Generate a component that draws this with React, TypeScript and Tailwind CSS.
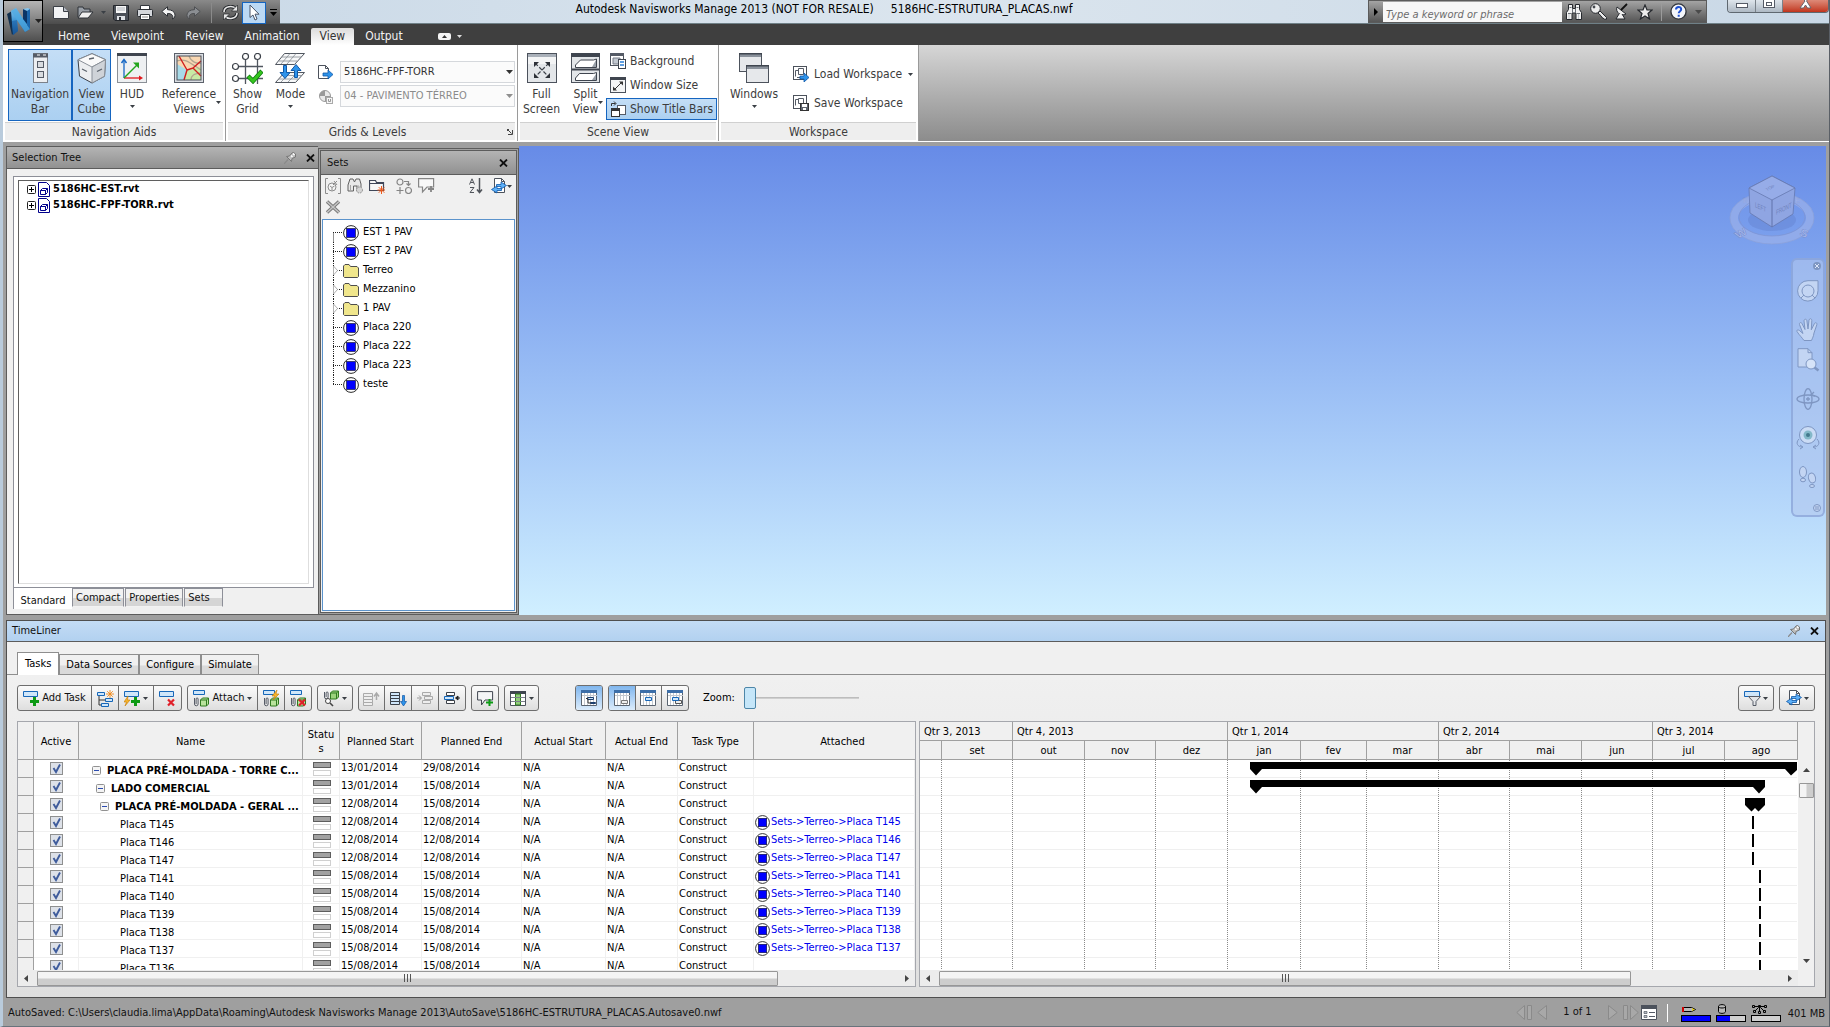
import type { ReactNode } from "react";

/* ---------- small helpers ---------- */

function Caret({ className = "text-[#3a3f45]" }: { className?: string }) {
  return (
    <svg width="7" height="4" viewBox="0 0 7 4" className={"shrink-0 " + className} aria-hidden="true">
      <path d="M0 0h7L3.500 4z" fill="currentColor" />
    </svg>
  );
}

function SmallCaret() {
  return (
    <svg width="5" height="3" viewBox="0 0 5 3" className="shrink-0" aria-hidden="true">
      <path d="M0 0h5L2.500 3z" fill="#3a3f45" />
    </svg>
  );
}

function CloseGlyph() {
  return (
    <svg width="9" height="8" viewBox="0 0 9 8" aria-hidden="true">
      <path d="M1 .5l7 7M8 .5l-7 7" stroke="#111" strokeWidth="1.800" />
    </svg>
  );
}

function PinGlyph() {
  return (
    <svg width="12" height="12" viewBox="0 0 12 12" aria-hidden="true">
      <path d="M0 12l4-4.500" stroke="#8a8a8a" strokeWidth="1.200" />
      <path d="M2.500 4.500l5 5 .5-3 3.500-1.500V2L9.500.5 8 1 5.500 4z" fill="#bdbdbd" stroke="#767676" />
      <path d="M7 3.500l1.500 1.500M9 1.500l1.500 1.500" stroke="#fff" strokeWidth="1.400" />
    </svg>
  );
}

function SetBall({ size }: { size: number }) {
  return (
    <svg width={size} height={size} viewBox="0 0 16 16" className="shrink-0" aria-hidden="true">
      <circle cx="8" cy="8" r="7.400" fill="#fff" stroke="#2a2a2a" />
      <rect x="3.500" y="3.500" width="9" height="9" fill="#0000ff" stroke="#112" strokeWidth=".6" />
    </svg>
  );
}

function FolderGlyph() {
  return (
    <svg width="16" height="16" viewBox="0 0 16 16" className="shrink-0" aria-hidden="true">
      <path d="M.5 13.500V3L2 1.500h4L7.500 3.500H14L15.500 5v8.500l-1 1h-13z" fill="#f0e68c" stroke="#4d4d4d" />
    </svg>
  );
}

/* ---------- application header ---------- */

function AppLogo() {
  return (
    <svg width="24" height="27" viewBox="0 0 24 27" aria-hidden="true">
      <defs>
        <linearGradient id="lg" x1="0" y1="0" x2="0" y2="1">
          <stop offset="0" stopColor="#8ccaf0" />
          <stop offset=".5" stopColor="#3a92d2" />
          <stop offset="1" stopColor="#0d4484" />
        </linearGradient>
      </defs>
      <path d="M0 6l5-3 5 4-1 15-4 5z" fill="#12304f" />
      <path d="M4 3l5-3 7 11V1l5-1 2 1v20l-5 3-8-12 1 11-5 4z" fill="url(#lg)" />
      <path d="M9 0l14 21-5 3L4 3z" fill="#4da8e0" opacity=".75" />
      <path d="M16 1l4 2v13l-4-5z" fill="#0b3566" />
      <path d="M20 3l3-2v20l-3-4z" fill="#1b65ab" />
      <path d="M10 12l1 11-5 4-1-14z" fill="#1c5fa3" opacity=".6" />
    </svg>
  );
}

function QuickButton({ label, children, w = "w-6" }: { label: string; children: ReactNode; w?: string }) {
  return (
    <button aria-label={label} className={"flex h-[22px] items-center justify-center " + w}>
      {children}
    </button>
  );
}

function QuickAccess() {
  return (
    <div className="flex h-6 w-[237px] shrink-0 items-center bg-gradient-to-b from-[#8a8a8a] to-[#4c4c4c] pt-px pl-1.5">
      <QuickButton label="New">
        <svg width="16" height="13" viewBox="0 0 16 13"><path d="M.5.500h10l5 5v7H.5z" fill="#f2f3f5" stroke="#3b3f46" /><path d="M10.500.500v5h5" fill="#b9bec6" stroke="#3b3f46" /></svg>
      </QuickButton>
      <QuickButton label="Open">
        <svg width="17" height="13" viewBox="0 0 17 13"><path d="M1 11V1h5l1 2h6v3" fill="#9aa0a8" stroke="#2f3338" /><path d="M1 12l4-6h11l-5 6z" fill="#f0f0f0" stroke="#2f3338" /></svg>
      </QuickButton>
      <QuickButton label="Open options" w="w-3"><SmallCaret /></QuickButton>
      <QuickButton label="Save">
        <svg width="16" height="16" viewBox="0 0 16 16"><path d="M.5.500h15v15H2l-1.500-1.500z" fill="#4b5058" stroke="#24272c" /><path d="M3 1h10v7H3z" fill="#f7f7f7" /><path d="M4 11h8v4H4z" fill="#dfe2e6" /><path d="M6 12h2v3H6z" fill="#30343a" /><path d="M4 3h8M4 5h8" stroke="#aeb3ba" /></svg>
      </QuickButton>
      <QuickButton label="Print">
        <svg width="16" height="15" viewBox="0 0 16 15"><path d="M3.500 5V.5h9V5" fill="#fff" stroke="#33373d" /><rect x=".5" y="4.500" width="15" height="7" rx="1" fill="#d4d7dc" stroke="#2b2e33" /><path d="M3.500 9.500h9v5h-9z" fill="#fff" stroke="#33373d" /><path d="M5 12h6" stroke="#888" /></svg>
      </QuickButton>
      <QuickButton label="Undo">
        <svg width="16" height="14" viewBox="0 0 16 14"><path d="M6.500.8L.8 5.500l5.700 4.700V7.500c4 0 6 1.500 5 5.500C15 12 16 4 6.500 3.600z" fill="#f4f4f4" stroke="#2b2e33" /></svg>
      </QuickButton>
      <QuickButton label="Redo">
        <svg width="16" height="14" viewBox="0 0 16 14"><path d="M9.500.8l5.700 4.700-5.700 4.700V7.500c-4 0-6 1.500-5 5.500C1 12 0 4 9.500 3.600z" fill="#8b8e92" stroke="#4d4f52" /></svg>
      </QuickButton>
      <span className="mx-1.5 h-5 w-px bg-[#8a8a8a]" />
      <QuickButton label="Refresh">
        <svg width="17" height="15" viewBox="0 0 17 15" fill="none"><path d="M2 7c0-6 9-7 12-3M15 8c0 6-9 7-12 3" stroke="#26292d" strokeWidth="3.500" /><path d="M2 7c0-6 9-7 12-3M15 8c0 6-9 7-12 3" stroke="#e8e8e8" strokeWidth="1.600" /><path d="M15.500 0v6h-6zM1.500 15V9h6z" fill="#e8e8e8" stroke="#26292d" strokeWidth=".7" /></svg>
      </QuickButton>
      <button aria-label="Select" className="flex h-[22px] w-6 items-center justify-center border border-[#1565c0] bg-[#bcd9f4]">
        <svg width="11" height="17" viewBox="0 0 11 17"><path d="M1 1v12.500l3-2.500 2 5 2-1-2-4.800h4z" fill="#fff" stroke="#4a5568" /></svg>
      </button>
      <button aria-label="Customize quick access" className="flex h-[22px] flex-1 flex-col items-center justify-center gap-0.5">
        <span className="h-px w-[7px] bg-black" />
        <Caret className="text-black" />
      </button>
    </div>
  );
}

function SearchBox() {
  return (
    <div className="flex h-[23px] w-[339px] shrink-0 items-center border border-[#5b5b5b] bg-gradient-to-b from-[#a4a4a4] to-[#565656]">
      <button aria-label="Collapse search" className="flex w-3.5 justify-center">
        <svg width="4" height="8" viewBox="0 0 4 8"><path d="M0 0l4 4-4 4z" /></svg>
      </button>
      <input
        aria-label="Search"
        placeholder="Type a keyword or phrase"
        className="h-5 w-[179px] bg-[#f7f7f7] px-[3px] pt-1.5 text-[11px] italic placeholder:text-[#6b6b6b]"
      />
      <div className="flex flex-1 items-center justify-between pr-1 pl-1">
        <button aria-label="Find">
          <svg width="16" height="16" viewBox="0 0 16 16"><path d="M2.500.500h4v4h3v-4h4v5l2 3v7h-5.500V9h-4v6.500H.5v-7l2-3z" fill="#f2f2f2" stroke="#25282d" /><path d="M6.500 5v4M9.500 5v4M2 9.500h3M11 9.500h3M3.500 3.500h2M10.500 3.500h2" stroke="#6c7178" /><path d="M3 10v5M12.500 10v5" stroke="#c2c6cb" /></svg>
        </button>
        <button aria-label="Subscription">
          <svg width="17" height="17" viewBox="0 0 17 17"><circle cx="5.500" cy="5.500" r="4.800" fill="#ececec" stroke="#25282d" /><path d="M8 10l2-2 6.500 6.500v1.700h-2.300l-1-1.200-1.500-.5-.5-1.500z" fill="#ececec" stroke="#25282d" /><circle cx="4" cy="4" r="1.400" fill="#44484e" /></svg>
        </button>
        <button aria-label="Communication Center">
          <svg width="14" height="17" viewBox="0 0 14 17"><path d="M2 4c-2 5 4 10 9 7z" fill="#eee" stroke="#25282d" /><path d="M6 7l6-6" stroke="#111" strokeWidth="1.800" /><path d="M4 11l-3 5h9l-3-5" fill="#f2f2f2" stroke="#25282d" /></svg>
        </button>
        <button aria-label="Favorites">
          <svg width="16" height="16" viewBox="0 0 16 16"><path d="M8 1l2 5h5l-4 3.500 1.600 5.500L8 12l-4.600 3L5 9.500 1 6h5z" fill="#ededed" stroke="#25282d" strokeWidth="1.200" /></svg>
        </button>
        <span className="h-[18px] w-px bg-[#9b9b9b]" />
        <button aria-label="Help">
          <svg width="17" height="17" viewBox="0 0 17 17"><circle cx="8.500" cy="8.500" r="7.600" fill="#f4f6fb" stroke="#33363c" strokeWidth="1.400" /><path d="M6 6.500C6 3 11.300 3.200 11.200 6.300c0 1.900-2.500 2-2.500 4M8.700 11.700v2" stroke="#1d4fd0" strokeWidth="2" fill="none" /></svg>
        </button>
        <Caret className="text-[#4a4a4a]" />
      </div>
    </div>
  );
}

function WindowButtons() {
  return (
    <div className="ml-5 flex h-[13px] w-[102px] shrink-0 overflow-hidden rounded-b-[4px] border border-t-0 border-[#5f6870]">
      <button aria-label="Minimize" className="flex w-[28px] items-center justify-center border-r border-[#7a828a] bg-gradient-to-b from-[#dfe6ec] to-[#aeb9c4]">
        <span className="-mt-0.5 h-[5px] w-3 border border-[#555b66] bg-white" />
      </button>
      <button aria-label="Restore" className="flex w-[27px] justify-center border-r border-[#7a828a] bg-gradient-to-b from-[#dfe6ec] to-[#aeb9c4]">
        <span className="flex h-2 w-3 items-center justify-center border border-t-0 border-[#555b66] bg-white">
          <span className="h-1 w-1.5 border border-[#555b66]" />
        </span>
      </button>
      <button aria-label="Close" className="flex flex-1 justify-center bg-gradient-to-b from-[#dd8a78] to-[#c0331c]">
        <svg width="13" height="9" viewBox="0 0 13 9"><path d="M1 -4l5 5-5 7h3.500l2-3 2 3H12L7.500 1l4-5" fill="#fff" stroke="#5a5f6a" strokeWidth=".9" /></svg>
      </button>
    </div>
  );
}

const menuTabs = ["Home", "Viewpoint", "Review", "Animation", "View", "Output"];

function Header() {
  return (
    <header className="flex bg-[#3f3f3f]">
      <button aria-label="Application menu" className="flex h-[42px] w-10 shrink-0 items-center gap-1 border border-black bg-gradient-to-b from-[#b5b5b5] to-[#505050] pl-[3px]">
        <AppLogo />
        <Caret className="text-[#222]" />
      </button>
      <div className="flex min-w-0 flex-1 flex-col">
        <div className="flex h-6 border-b border-[#6f8087] bg-gradient-to-r from-[#c7d7e6] via-[#dbe5ee] to-[#c9d8e6]">
          <QuickAccess />
          <h1 className="min-w-0 flex-1 truncate text-center text-xs leading-[18px] whitespace-pre text-black">
            {"Autodesk Navisworks Manage 2013 (NOT FOR RESALE)     5186HC-ESTRUTURA_PLACAS.nwf"}
          </h1>
          <SearchBox />
          <WindowButtons />
        </div>
        <nav className="flex h-[21px] items-end gap-px pl-[5px] text-xs text-[#f2f2f2]">
          {menuTabs.map((t) => (
            <button
              key={t}
              className={
                t === "View"
                  ? "h-[17px] rounded-t-[2px] bg-gradient-to-b from-[#dcdcdc] to-white px-[9px] pb-0.5 leading-[14px] text-[#333]"
                  : "h-[17px] px-2.5 pb-0.5 leading-[14px]"
              }
            >
              {t}
            </button>
          ))}
          <button aria-label="Minimize ribbon" className="ml-6 flex h-[17px] items-center gap-1.5 pb-px">
            <svg width="13" height="7" viewBox="0 0 13 7"><rect width="13" height="7" rx="2" fill="#f4f4f4" /><path d="M4 5l2.500-3L9 5z" fill="#333" /></svg>
            <svg width="5" height="3" viewBox="0 0 5 3"><path d="M0 0h5L2.500 3z" fill="#ddd" /></svg>
          </button>
        </nav>
      </div>
    </header>
  );
}

/* ---------- ribbon ---------- */

function RibbonPanel({ title, children, w, launcher }: { title: string; children: ReactNode; w: string; launcher?: boolean }) {
  return (
    <section className={"flex shrink-0 flex-col border-r border-[#9a9a9a] bg-white " + w}>
      <div className="flex h-[77px] items-start pt-1">{children}</div>
      <div className="mx-0.5 flex h-[18px] items-center border-t border-[#d0d0d0] bg-[#eeeeee]">
        <h2 className="flex-1 text-center text-xs leading-4 text-[#3c3c3c]">{title}</h2>
        {launcher && (
          <button aria-label={title + " options"} className="mr-0.5">
            <svg width="6" height="6" viewBox="0 0 6 6"><path d="M0 .5h2M.5 0v2M1 1l3.500 3.500M5.500 1v4.500H1" stroke="#444" fill="none" /></svg>
          </button>
        )}
      </div>
      <div className="h-px" />
    </section>
  );
}

function BigButton({ icon, lines, caret, sideCaret, active, w }: { icon: ReactNode; lines: string[]; caret?: boolean; sideCaret?: boolean; active?: boolean; w: string }) {
  return (
    <button
      className={
        "flex h-[72px] shrink-0 flex-col items-center border pt-[3px] text-xs leading-[15px] text-[#3c3c3c] " +
        (active ? "border-[#1565c0] bg-gradient-to-b from-[#c4def6] to-[#abd0f1] " : "border-transparent ") +
        w
      }
    >
      {icon}
      <span className="mt-[3px] flex items-center">
        {sideCaret && <span className="w-[5px]" />}
        <span className="flex flex-col items-center">
          {lines.map((l) => (
            <span key={l}>{l}</span>
          ))}
        </span>
        {sideCaret && <SmallCaret />}
      </span>
      {caret && <span className="mt-[3px]"><SmallCaret /></span>}
    </button>
  );
}

const navBarIcon = (
  <svg width="30" height="31" viewBox="0 0 30 31"><rect x="8.500" y=".5" width="14" height="29" fill="#eceef1" stroke="#7b818a" /><path d="M8 .5h15v4H8z" fill="#555b66" /><path d="M18 2h3M12 2h3" stroke="#fff" /><rect x="12.500" y="8.500" width="6" height="6" fill="#d9dce0" stroke="#555b66" /><rect x="12.500" y="18.500" width="6" height="6" fill="#d9dce0" stroke="#555b66" /></svg>
);
const cubeIcon = (
  <svg width="30" height="31" viewBox="0 0 30 31"><path d="M15 .7l13.500 6-1 16.500L15 30 2.500 23.200 1 6.700z" fill="#eceef0" stroke="#3b4048" /><path d="M1 6.700L15 14l13.500-7.300L15 .7z" fill="#fafafa" stroke="#8a9098" /><path d="M15 14v16l12.500-6.800 1-16.500z" fill="#cfd3d8" stroke="#8a9098" /><path d="M5 16l5 2.500M20 18.500l5-2.500M12 6l5-1" stroke="#5c636c" strokeWidth="1.300" /></svg>
);
const hudIcon = (
  <svg width="30" height="31" viewBox="0 0 30 31"><rect x=".5" y=".5" width="29" height="29" fill="#eef0f2" stroke="#8b9097" /><path d="M0 0h30v3H0z" fill="#3f454f" /><path d="M7 25V8" stroke="#1767c4" strokeWidth="1.300" /><path d="M4.500 10L7 6.500 9.500 10" fill="none" stroke="#1767c4" strokeWidth="1.500" /><path d="M7 25h17" stroke="#e0171c" strokeWidth="1.300" /><path d="M22 22.500l4 2.500-4 2.500z" fill="#e0171c" /><path d="M7 25L20 12" stroke="#22a51c" strokeWidth="1.500" /><path d="M22 9.500v6l-6-6z" fill="#22a51c" /></svg>
);
const mapIcon = (
  <svg width="30" height="31" viewBox="0 0 30 31"><rect x=".5" y=".5" width="29" height="29" fill="#dcdfe3" stroke="#5b616b" /><rect x="3" y="3" width="24" height="24" fill="#f9d7b2" /><path d="M3 11l10 6-3 10H3z" fill="#a8dbe8" /><path d="M13 17l14-3v13H10z" fill="#c8eaa4" /><path d="M3 8c8-3 12 1 24 9M15 3c2 6 8 8 12 7M17 27c0-5 5-7 10-7" stroke="#b3a68f" strokeWidth="1.300" fill="none" /><path d="M5 3l8 14-3 10M13 17l6-2 8 8M19 15l8-7" stroke="#d01e1e" strokeWidth="1.400" fill="none" /><rect x="3" y="3" width="24" height="24" fill="none" stroke="#4b515b" /></svg>
);
const gridIcon = (
  <svg width="31" height="31" viewBox="0 0 31 31" fill="none"><path d="M13.500 7v24M25.500 7v24M6 13.500h25M6 25.500h25" stroke="#50565f" strokeWidth="1.300" /><circle cx="13.500" cy="3.500" r="3" stroke="#3b4048" fill="#fff" strokeWidth="1.200" /><circle cx="25.500" cy="3.500" r="3" stroke="#3b4048" fill="#fff" strokeWidth="1.200" /><circle cx="3.500" cy="13.500" r="3" stroke="#3b4048" fill="#fff" strokeWidth="1.200" /><circle cx="3.500" cy="25.500" r="3" stroke="#3b4048" fill="#fff" strokeWidth="1.200" /><path d="M16 23l5 5 9-10" stroke="#0d7a10" strokeWidth="4.500" /><path d="M16.500 23.500l4.500 4.500 8.500-9.500" stroke="#35c41e" strokeWidth="3" /></svg>
);
const modeIcon = (
  <svg width="31" height="31" viewBox="0 0 31 31"><path d="M9.500.5h20l-10 11H.5zM9.500 19.500h20l-9 10H.5z" fill="#f7f8f9" stroke="#50565f" /><path d="M7 4h19M4 8h18M15 .5L6 11M21 .5L12 11M7 22.500h19M4 26h19M15 20l-9 9M22 20l-9 9" stroke="#858b93" strokeWidth=".8" /><path d="M8.500 12.500h3v7h3.500l-5 6-5-6h3.500z" fill="#2e93ea" stroke="#0f58a8" /><path d="M19.500 24.500h3v-7h3.500l-5-6-5 6h3.500z" fill="#2e93ea" stroke="#0f58a8" /></svg>
);
const fullIcon = (
  <svg width="30" height="31" viewBox="0 0 30 31"><rect x=".5" y=".5" width="29" height="29" fill="#e3e6e9" stroke="#4c525c" /><path d="M1 1h28v3H1z" fill="#a9b0b9" /><path d="M1 4h28v7H1z" fill="#f3f4f5" /><path d="M8 10l14 14M22 10L8 24" stroke="#3b4048" strokeWidth="1.200" strokeDasharray="4 2" /><path d="M7 9h5l-5 5zM23 9h-5l5 5zM7 25h5l-5-5zM23 25h-5l5-5z" fill="#2d3138" /></svg>
);
const splitIcon = (
  <svg width="30" height="31" viewBox="0 0 30 31"><rect x=".5" y=".5" width="28" height="29" fill="#e3e6e9" stroke="#4c525c" /><path d="M0 0h29v4H0z" fill="#3f454f" /><path d="M1 16.500h27" stroke="#3f454f" strokeWidth="2" /><path d="M4.500 14.500V12l5-5h13l3-1v8.500zM4.500 27.500V25l4-4.500h14l3-1v8z" fill="#fff" stroke="#3f454f" /><path d="M21 14l4-7v7zM21 27l4-6v6z" fill="#9aa1aa" /></svg>
);
const windowsIcon = (
  <svg width="30" height="31" viewBox="0 0 30 31"><rect x=".5" y=".5" width="22" height="18" fill="#e6e8eb" stroke="#4c525c" /><path d="M1 1h21v3H1z" fill="#8a919b" /><path d="M0 0h23v1.500H0z" fill="#3f454f" /><rect x="7.500" y="12.500" width="22" height="17" fill="#e6e8eb" stroke="#4c525c" /><path d="M8 13h21v3H8z" fill="#8a919b" /><path d="M7 12h23v1.500H7z" fill="#3f454f" /></svg>
);

function RibbonSelect({ label, value, disabled }: { label: string; value: string; disabled?: boolean }) {
  return (
    <div className="relative">
      <select
        aria-label={label}
        disabled={disabled}
        className={"block h-[22px] w-[175px] appearance-none border border-[#d5d8dc] bg-[#fbfbfb] pr-4 pl-[3px] text-[11px] " + (disabled ? "text-[#8b8b8b]" : "text-[#333]")}
      >
        <option>{value}</option>
      </select>
      <span className="pointer-events-none absolute top-[9px] right-0.5">
        <Caret className={disabled ? "text-[#8f8f8f]" : "text-[#333]"} />
      </span>
    </div>
  );
}

function SmallButton({ icon, label, active, caret }: { icon: ReactNode; label: string; active?: boolean; caret?: boolean }) {
  return (
    <button
      className={
        "flex h-[22px] items-center border pr-[3px] pl-[3px] text-xs whitespace-nowrap text-[#3c3c3c] " +
        (active ? "border-[#1565c0] bg-gradient-to-b from-[#c4def6] to-[#abd0f1]" : "border-transparent")
      }
    >
      {icon}
      <span className="ml-1">{label}</span>
      {caret && <span className="ml-1.5"><SmallCaret /></span>}
    </button>
  );
}

const bgIcon = (
  <svg width="16" height="16" viewBox="0 0 16 16"><rect x=".5" y=".5" width="13" height="12" fill="#fff" stroke="#4c525c" /><path d="M0 0h14v3H0z" fill="#555b66" /><path d="M3 5h7v6H3z" fill="#c2c8d0" stroke="#767d88" /><rect x="8.500" y="6.500" width="7" height="9" fill="#fff" stroke="#3f454f" /><path d="M10 9h4M10 12h4" stroke="#2b7fd6" strokeWidth="1.500" /></svg>
);
const sizeIcon = (
  <svg width="16" height="16" viewBox="0 0 16 16"><rect x=".5" y=".5" width="15" height="15" fill="#f4f5f6" stroke="#4c525c" /><path d="M0 0h16v3H0z" fill="#3f454f" /><path d="M4 13l8-8" stroke="#333" /><path d="M9 4.500h4v4zM3 9.500v4h4z" fill="#333" /></svg>
);
const titleBarsIcon = (
  <svg width="16" height="16" viewBox="0 0 16 16"><path d="M1.500 5V2.500h4M4 .5l2 2-2 2" stroke="#333" fill="none" /><rect x="7.500" y="4.500" width="8" height="9" fill="#fff" stroke="#555b66" /><rect x="1.500" y="7.500" width="8" height="8" fill="#fff" stroke="#333" /><path d="M1 7h9v3H1z" fill="#333" /></svg>
);
const loadIcon = (
  <svg width="17" height="16" viewBox="0 0 17 16"><rect x=".5" y=".5" width="13" height="13" fill="#fff" stroke="#4c525c" /><path d="M2.500 10.500v-6h3M5.500 2.500h5v6h-5z" stroke="#555b66" fill="none" /><path d="M4 11.500h5" stroke="#555b66" /><path d="M7 10h4V7l5 4.500-5 4.500v-3H7z" fill="#2e93ea" stroke="#0f58a8" strokeWidth=".8" /></svg>
);
const saveWsIcon = (
  <svg width="17" height="16" viewBox="0 0 17 16"><rect x=".5" y=".5" width="13" height="13" fill="#fff" stroke="#4c525c" /><path d="M2.500 10.500v-6h3M5.500 3.500h5v5h-5z" stroke="#555b66" fill="none" /><rect x="7.500" y="8.500" width="8" height="7" fill="#5d636d" stroke="#333" /><path d="M9 9h5v3H9zM10 13h3v2h-3z" fill="#fff" /></svg>
);

function Ribbon() {
  return (
    <div className="flex border-b border-white bg-gradient-to-b from-[#d6d6d6] to-[#8c8c8c]">
      <RibbonPanel title="Navigation Aids" w="w-[223px]">
        <span className="w-[5px]" />
        <BigButton icon={navBarIcon} lines={["Navigation", "Bar"]} active w="w-[64px]" />
        <BigButton icon={cubeIcon} lines={["View", "Cube"]} active w="w-[39px]" />
        <BigButton icon={hudIcon} lines={["HUD"]} caret w="w-[42px]" />
        <BigButton icon={mapIcon} lines={["Reference", "Views"]} sideCaret w="w-[72px]" />
      </RibbonPanel>
      <RibbonPanel title="Grids & Levels" launcher w="w-[292px]">
        <BigButton icon={gridIcon} lines={["Show", "Grid"]} w="w-[43px]" />
        <BigButton icon={modeIcon} lines={["Mode"]} caret w="w-[43px]" />
        <div className="flex flex-col gap-0.5 pt-3">
          <div className="flex items-center gap-[7px] pl-1.5">
            <svg width="15" height="15" viewBox="0 0 15 15"><path d="M.5.500h7l3 3v10H.5z" fill="#fff" stroke="#4c525c" /><path d="M7.500.500v3h3" fill="none" stroke="#4c525c" /><path d="M5 8h5V5l5 4.500L10 14v-3H5z" fill="#2e93ea" stroke="#0f58a8" strokeWidth=".8" /></svg>
            <RibbonSelect label="Active grid" value="5186HC-FPF-TORR" />
          </div>
          <div className="flex items-center gap-[7px] pl-1.5">
            <svg width="15" height="15" viewBox="0 0 15 15"><circle cx="7" cy="7" r="5.500" fill="#e9e9e9" stroke="#999" /><path d="M7 1.500V7H1.500A5.500 5.500 0 017 1.500zM7 7h5.500v5H7z" fill="#999" /><rect x="8.500" y="8.500" width="6" height="6" fill="#f5f5f5" stroke="#aaa" /><path d="M10.500 10v2.500h2V10" stroke="#999" fill="none" /></svg>
            <RibbonSelect label="Active level" value="04 - PAVIMENTO TÉRREO" disabled />
          </div>
        </div>
      </RibbonPanel>
      <RibbonPanel title="Scene View" w="w-[201px]">
        <BigButton icon={fullIcon} lines={["Full", "Screen"]} w="w-[47px]" />
        <BigButton icon={splitIcon} lines={["Split", "View"]} sideCaret w="w-[41px]" />
        <div className="flex flex-col gap-0.5 pt-px">
          <SmallButton icon={bgIcon} label="Background" />
          <SmallButton icon={sizeIcon} label="Window Size" />
          <SmallButton icon={titleBarsIcon} label="Show Title Bars" active />
        </div>
      </RibbonPanel>
      <RibbonPanel title="Workspace" w="w-[200px]">
        <BigButton icon={windowsIcon} lines={["Windows"]} caret w="w-[70px]" />
        <div className="flex flex-col gap-[7px] pt-3.5">
          <SmallButton icon={loadIcon} label="Load Workspace" caret />
          <SmallButton icon={saveWsIcon} label="Save Workspace" />
        </div>
      </RibbonPanel>
    </div>
  );
}

/* ---------- docked panels ---------- */

const treeFiles = ["5186HC-EST.rvt", "5186HC-FPF-TORR.rvt"];

function SelectionTree() {
  return (
    <section className="flex w-[312px] shrink-0 flex-col border border-r-0 border-[#5c5c5c] bg-[#f0f0f0]">
      <div className="flex h-[22px] shrink-0 items-center border-b border-[#5c5c5c] bg-gradient-to-b from-[#b4b4b4] to-[#919191] pr-[3px] pl-[5px]">
        <h2 className="flex-1 text-[11px] leading-4 text-[#111]">Selection Tree</h2>
        <button aria-label="Pin" className="mr-2.5"><PinGlyph /></button>
        <button aria-label="Close Selection Tree"><CloseGlyph /></button>
      </div>
      <div className="mt-[7px] mr-1 ml-1.5 flex flex-1 border border-[#8d8f98] bg-white px-1 py-[3px]">
        <ul className="flex-1 border border-t-[#5f5f5f] border-r-[#dedede] border-b-[#dedede] border-l-[#5f5f5f] pl-2 text-[11px] font-bold">
          {treeFiles.map((f) => (
            <li key={f} className="flex h-4 items-center">
              <button aria-label={"Expand " + f} className="mr-0.5">
                <svg width="9" height="9" viewBox="0 0 9 9"><rect x=".5" y=".5" width="8" height="8" rx="1" fill="#fff" stroke="#222" /><path d="M2 4.500h5M4.500 2v5" stroke="#000" /></svg>
              </button>
              <svg width="12" height="15" viewBox="0 0 12 15" className="mr-[3px]"><path d="M.5.500h8l3 3v11H.5z" fill="#fff" stroke="#00008b" /><path d="M2.500 8.500l2-2h5l-2 2zM2.500 8.500h5v4h-5zM7.500 12.500l2-2v-4" fill="#fff" stroke="#00008b" /></svg>
              {f}
            </li>
          ))}
        </ul>
      </div>
      <div className="mr-1 ml-1.5 flex items-start text-[11px] leading-4 text-[#111]">
        <button className="h-[21px] w-[59px] border-l border-[#8d8f98] bg-white pt-1 leading-4">Standard</button>
        {["Compact", "Properties", "Sets"].map((t) => (
          <button key={t} className="mr-px h-[19px] border border-t border-[#8d8f98] border-b-transparent bg-gradient-to-b from-[#f2f2f2] from-50% to-[#d5d5d5] to-55% px-[3px] leading-4 last:pr-3">
            {t}
          </button>
        ))}
      </div>
      <div className="h-[5px]" />
    </section>
  );
}

const setItems: { name: string; folder?: boolean }[] = [
  { name: "EST 1 PAV" },
  { name: "EST 2 PAV" },
  { name: "Terreo", folder: true },
  { name: "Mezzanino", folder: true },
  { name: "1 PAV", folder: true },
  { name: "Placa 220" },
  { name: "Placa 222" },
  { name: "Placa 223" },
  { name: "teste" },
];

function ImportGlyph() {
  return (
    <svg width="16" height="16" viewBox="0 0 16 16" className="shrink-0" aria-hidden="true">
      <path d="M3.500.500h7l3 3v11h-10z" fill="#fff" stroke="#4c525c" />
      <path d="M10.500.500v3h3" fill="none" stroke="#4c525c" />
      <path d="M5.500 6.500h4.500V4L15.500 7.500 10 11V8.500H5.500z" fill="#5db0f8" stroke="#0f58a8" strokeWidth=".8" />
      <path d="M10.500 10.500H6V8L.5 11.500 6 15v-2.500h4.500z" fill="#5db0f8" stroke="#0f58a8" strokeWidth=".8" />
    </svg>
  );
}

function SetsWindow() {
  return (
    <section className="mt-0.5 flex w-[201px] shrink-0 flex-col border-3 border-[#5c5c5c] bg-[#f0f0f0] outline-1 -outline-offset-2 outline-[#a0a0a0]">
      <div className="flex h-6 shrink-0 items-center border-b border-[#5c5c5c] bg-gradient-to-b from-[#b4b4b4] to-[#919191] pr-2 pl-1.5">
        <h2 className="flex-1 pt-px text-[11px] text-[#111]">Sets</h2>
        <button aria-label="Close Sets"><CloseGlyph /></button>
      </div>
      <div className="flex h-[43px] shrink-0 flex-col gap-1.5 px-1 pt-[3px]">
        <div className="flex items-center">
          <button aria-label="Save selection">
            <svg width="16" height="16" viewBox="0 0 16 16" fill="none" stroke="#8c8c8c"><path d="M3 .5H.5v15H3M13 .5h2.500v15H13" /><circle cx="7" cy="9" r="4" fill="#f5f5f5" /><path d="M5 8l2 1.500v3M7 9.500L9.500 8M12 3l-4 4M9 3l3 4" /></svg>
          </button>
          <button aria-label="Find items" className="ml-1.5">
            <svg width="17" height="16" viewBox="0 0 17 16"><path d="M3 1h3l1.500 3L9 1h3.500l1.500 5v7h-4V8H6.500v5H1V7z" fill="#e8e8e8" stroke="#606060" /><path d="M3.500 7v5M11 7v4" stroke="#a5a5a5" /><circle cx="12.500" cy="12" r="3" fill="#d5d5d5" stroke="#8c8c8c" strokeDasharray="1.500 1" /></svg>
          </button>
          <button aria-label="New folder" className="ml-[5px]">
            <svg width="16" height="15" viewBox="0 0 16 15"><path d="M.5 11.500v-10h6l1 2h7v8z" fill="#f7f7f7" stroke="#3f4658" strokeWidth="1.200" /><path d="M.5 4.500h14" stroke="#3f4658" /><path d="M12.500 7v8M8.500 11h8M9.800 8.200l5.500 5.500M15.300 8.200l-5.500 5.500" stroke="#ee5a1c" /></svg>
          </button>
          <button aria-label="Duplicate" className="ml-[11px]">
            <svg width="16" height="16" viewBox="0 0 16 16" fill="none" stroke="#858585" strokeWidth="1.200"><circle cx="4" cy="4" r="3" /><circle cx="12.500" cy="12.500" r="3" /><path d="M8 3.500h4.500V7M10.500 5.500l2 2 2-2M4 9v7M.5 12.500h7" /></svg>
          </button>
          <button aria-label="Add comment" className="ml-1.5">
            <svg width="17" height="16" viewBox="0 0 17 16" fill="#f8f8f8" stroke="#858585" strokeWidth="1.200"><path d="M.6.600h15V9H9l-4.500 5V9H.6z" /><path d="M13 8v6M10 11h6" strokeWidth="1.800" /></svg>
          </button>
          <span className="flex-1" />
          <button aria-label="Sort">
            <svg width="14" height="16" viewBox="0 0 14 16" fill="none" stroke="#50545a"><path d="M.5 6.500L3 .8l2.500 5.700M1.500 4.500h3M1 9.500h4l-4 5h4" /><path d="M10.500 0v14M8 11.500l2.500 3 2.500-3" strokeWidth="1.500" /></svg>
          </button>
          <button aria-label="Import/Export" className="ml-2 flex items-center"><ImportGlyph /><SmallCaret /></button>
        </div>
        <div>
          <button aria-label="Delete" className="block">
            <svg width="16" height="14" viewBox="0 0 16 14"><path d="M2 1.500l12 11M14 1.500l-12 11" stroke="#777" strokeWidth="3.400" /><path d="M2 1.500l12 11M14 1.500l-12 11" stroke="#c4c4c4" strokeWidth="1.600" /></svg>
          </button>
        </div>
      </div>
      <ul className="m-px flex-1 border border-[#5b93cc] bg-white pt-[3px] pl-2.5 text-[11px]">
        {setItems.map((s, i) => (
          <li key={s.name} className="flex h-[19px] items-center">
            <svg width="10" height="19" viewBox="0 0 10 19" className="shrink-0">
              <path d={i === 0 ? "M.5 9.500V19" : i === setItems.length - 1 ? "M.5 0v9.500" : "M.5 0v19"} stroke="#222" strokeDasharray="1 1" />
              <path d="M0 9.500h10" stroke="#222" strokeDasharray="1 1" />
              {s.folder && <path d="M.5 5l4 4.500-4 4.500z" fill="#fff" stroke="#b0b0b0" />}
            </svg>
            {s.folder ? <FolderGlyph /> : <SetBall size={16} />}
            <span className="ml-1">{s.name}</span>
          </li>
        ))}
      </ul>
    </section>
  );
}

function ViewCube() {
  return (
    <svg width="86" height="74" viewBox="0 0 86 74" aria-label="View cube" fontFamily="Liberation Sans" fontWeight="bold">
      <g fill="#a9bcf0" stroke="#7488c8" strokeWidth=".5" fontSize="8">
        <text x="14" y="30">N</text>
        <text x="66" y="30">E</text>
      </g>
      <ellipse cx="43" cy="45" rx="38" ry="22" fill="none" stroke="#9bb0ea" strokeWidth="8" opacity=".7" />
      <ellipse cx="43" cy="45" rx="42" ry="26" fill="none" stroke="#8ba0d8" strokeWidth=".7" />
      <ellipse cx="43" cy="44" rx="33" ry="19" fill="none" stroke="#7f94d0" strokeWidth=".7" />
      <ellipse cx="43" cy="47" rx="24" ry="11" fill="#5f7cc9" opacity=".35" />
      <path d="M43 3L66 15 64 41 43 54 21 40 20 15z" fill="#8fa5e2" stroke="#6678b0" strokeWidth=".8" />
      <path d="M20 15l23 12 23-12L43 3z" fill="#96ace8" stroke="#6678b0" strokeWidth=".8" />
      <path d="M43 27v27" stroke="#6072ab" />
      <g fill="#6f83bd" fontSize="7" fontWeight="normal">
        <text transform="matrix(.65 .3 0 1 26 34)">LEFT</text>
        <text transform="matrix(.65 -.33 0 1 47 42)">FRONT</text>
        <text transform="matrix(.7 -.35 .5 .5 38 18)" fontSize="6">TOP</text>
      </g>
      <g fill="#a9bcf0" stroke="#7488c8" strokeWidth=".5" fontSize="12">
        <text transform="matrix(.9 -.5 .5 .7 9 66)">W</text>
        <text transform="matrix(.9 .4 -.4 .8 70 62)">S</text>
      </g>
    </svg>
  );
}

function NavWheel() {
  return <svg width="22" height="22" viewBox="0 0 22 22"><path d="M11 .7h10v10A10.200 10.200 0 1111 .7z" /><circle cx="11" cy="11" r="6" /><path d="M4 18l3-3M18 18l-3-3" /></svg>;
}

function NavCaret() {
  return <svg width="5" height="3" viewBox="0 0 5 3" className="my-2" stroke="none"><path d="M0 0h5L2.500 3z" fill="#5d7aae" /></svg>;
}

function NavigationBar() {
  return (
    <div className="flex h-[259px] w-[34px] flex-col items-center rounded-md border-2 border-[#7f9ad0]/60 bg-[#b3c8ef]/60 fill-[#c3d5f3] stroke-[#7e96c2]">
      <button aria-label="Close navigation bar" className="mt-0.5 mr-0.5 self-end">
        <svg width="8" height="8" viewBox="0 0 8 8"><circle cx="4" cy="4" r="4" fill="#7e96c2" stroke="none" /><path d="M2 2l4 4M6 2L2 6" stroke="#dfe8fa" /></svg>
      </button>
      <button aria-label="Steering wheel" className="mt-2.5"><NavWheel /></button>
      <NavCaret />
      <span className="-mt-1 h-px w-[26px] bg-[#7e96c2]" />
      <button aria-label="Pan" className="mt-1">
        <svg width="24" height="24" viewBox="0 0 24 24"><path d="M8 22.500c-2-3-4.500-5-7-9-.5-2 1.500-2 3-.5l3 2.500L3.500 6.500c-.5-2 1.800-2.700 2.600-.7L9 11.500 8 3c0-2.200 2.600-2.400 2.900-.2l1.100 8.200 1-8.800c.3-2.200 2.900-1.800 2.800.4l-.5 9.200 3-6c1-1.900 3.200-.9 2.500 1L18 15c-.5 3.500-1.500 5-2.500 7.500z" /></svg>
      </button>
      <button aria-label="Zoom" className="mt-1.5">
        <svg width="24" height="24" viewBox="0 0 24 24"><path d="M2 .7h10l4 4V19H2z" /><path d="M12 .7v4h4" fill="none" /><circle cx="15" cy="16" r="5" fill="#d5e3f8" /><path d="M18.500 19.500l4 3" strokeWidth="2.500" /></svg>
      </button>
      <NavCaret />
      <button aria-label="Orbit">
        <svg width="24" height="22" viewBox="0 0 24 22" fill="none" strokeWidth="1.300"><ellipse cx="12" cy="11" rx="11" ry="4" /><ellipse cx="12" cy="11" rx="4" ry="10.300" /><path d="M10 11h4M12 9v4M18 4l-3 3 4 1" /></svg>
      </button>
      <NavCaret />
      <button aria-label="Look">
        <svg width="24" height="24" viewBox="0 0 24 24"><circle cx="12" cy="9" r="8.500" fill="#cbdcf5" /><circle cx="12" cy="9" r="4.500" fill="#83b8c8" stroke="none" /><circle cx="12" cy="9" r="2" fill="#43798c" stroke="none" /><path d="M3 13c-4 4-1 8 3 8M21 13c4 4 1 8-3 8M4 19l3 2-3 2M20 19l-3 2 3 2" fill="none" /></svg>
      </button>
      <NavCaret />
      <button aria-label="Walk">
        <svg width="22" height="22" viewBox="0 0 22 22"><ellipse cx="6" cy="6" rx="3.500" ry="5.500" /><ellipse cx="6" cy="14" rx="2.500" ry="1.800" /><ellipse cx="15" cy="12" rx="3.500" ry="5" transform="rotate(-15 15 12)" /><ellipse cx="15" cy="20" rx="2.500" ry="1.500" /></svg>
      </button>
      <NavCaret />
      <button aria-label="Navigation bar options" className="mt-auto mr-0.5 mb-1 self-end">
        <svg width="8" height="8" viewBox="0 0 8 8"><circle cx="4" cy="4" r="3.500" /><path d="M2 3h4M2 5h4" /></svg>
      </button>
    </div>
  );
}

function SceneView() {
  return (
    <main aria-label="Scene view" className="flex flex-1 flex-col items-end bg-gradient-to-b from-[#678be7] to-[#d0efff] pt-[27px] pr-px">
      <div className="mr-2.5"><ViewCube /></div>
      <div className="mt-[11px]"><NavigationBar /></div>
    </main>
  );
}

/* ---------- TimeLiner ---------- */

function Group({ children, className = "" }: { children: ReactNode; className?: string }) {
  return (
    <div className={"flex h-[26px] overflow-hidden rounded-[3px] border border-[#6e6e6e] bg-gradient-to-b from-[#fbfbfb] to-[#dedede] " + className}>
      {children}
    </div>
  );
}

function Tool({ label, text, children, w, caret, on }: { label: string; text?: string; children: ReactNode; w: string; caret?: boolean; on?: boolean }) {
  return (
    <button
      aria-label={label}
      className={
        "flex items-center justify-center gap-0.5 border-r border-[#6e6e6e] text-[11px] text-[#111] last:border-r-0 " +
        (on ? "bg-gradient-to-b from-[#7fb6ee] to-[#dcecfb] " : "") +
        w
      }
    >
      {children}
      {text && <span className="whitespace-nowrap">{text}</span>}
      {caret && <SmallCaret />}
    </button>
  );
}

const bar = <path d="M.5 1.500h14v5H.5z" fill="#cfe6fa" stroke="#1767b8" />;
const topBar = <path d="M.5.500h11v4H.5z" fill="#cfe6fa" stroke="#1767b8" />;
const plus = <path d="M11.500 7v9M7 11.500h9" stroke="#0c9a14" strokeWidth="3" />;
const clip = <path d="M1.500 8v6a1.800 1.800 0 003.600 0V9a1 1 0 00-2 0v5" stroke="#555b66" fill="none" />;
const greenCube = <path d="M7.500 10l2-2h6v6l-2 2h-6zM7.500 10h6v6M13.500 10l2-2" fill="#b9e39c" stroke="#2f7a20" />;
const spark = <path d="M13 0v8M9 4h8M10.200 1.200l5.600 5.600M15.800 1.200l-5.600 5.600" stroke="#f08a1c" strokeWidth=".9" />;
const redX = <path d="M9 9.500l6 6M15 9.500l-6 6" stroke="#e0202a" strokeWidth="2.200" />;

function Ic({ children, w = 17 }: { children: ReactNode; w?: number }) {
  return <svg width={w} height="17" viewBox={`0 0 ${w} 17`} className="shrink-0" aria-hidden="true">{children}</svg>;
}

function CalendarGlyph({ children }: { children: ReactNode }) {
  return (
    <Ic>
      <path d="M.5.500h15v15H.5z" fill="#fff" stroke="#5a6470" />
      <path d="M0 0h16v3H0z" fill="#3c6ea8" />
      <path d="M3.500 3v12M6.500 3v12M9.500 3v12M12.500 3v12M1 5.500h15" stroke="#c3c8cf" />
      {children}
    </Ic>
  );
}

function Toolbar() {
  return (
    <div className="flex items-center px-2.5 pt-2.5 pb-2.5">
      <Group>
        <Tool label="Add Task" text="Add Task" w="w-[74px]"><Ic>{bar}{plus}</Ic></Tool>
        <Tool label="Insert Task" w="w-[27px]"><Ic><path d="M.5 2.500h7v3h-7zM4.500 13.500h7v3h-7zM8.500 8.500h7v3h-7z" fill="#cfe6fa" stroke="#1767b8" /><path d="M2 6v9h2M2 10h6" stroke="#333" fill="none" />{spark}</Ic></Tool>
        <Tool label="Auto-Add Tasks" w="w-[35px]" caret><Ic>{bar}{plus}<path d="M4 6l-4 6h2.500l-1.500 4 5-6H3.500z" fill="#f7b52c" stroke="#c67a00" strokeWidth=".6" /></Ic></Tool>
        <Tool label="Delete Task" w="w-[27px]"><Ic>{bar}{redX}</Ic></Tool>
      </Group>
      <Group className="ml-[5px]">
        <Tool label="Attach" text="Attach" w="w-[70px]" caret><Ic>{topBar}{clip}{greenCube}</Ic></Tool>
        <Tool label="Auto-Attach" w="w-[27px]"><Ic>{topBar}{clip}{greenCube}<path d="M14 0l-5 6h3l-2 4 6-6h-3z" fill="#f7b52c" stroke="#c67a00" strokeWidth=".6" /></Ic></Tool>
        <Tool label="Clear Attachment" w="w-[26px]"><Ic>{topBar}{clip}{greenCube}{redX}</Ic></Tool>
      </Group>
      <Group className="ml-[5px]">
        <Tool label="Find Items" w="w-[34px]" caret><Ic><path d="M1.500 2v5a1.800 1.800 0 003.600 0V3a1 1 0 00-2 0v4" stroke="#555b66" fill="none" /><path d="M7.500 3l2-2h6v6l-2 2h-6zM7.500 3h6v6M13.500 3l2-2" fill="#9bd27c" stroke="#2f7a20" /><circle cx="5" cy="11" r="2.500" fill="#fff" stroke="#444" /><path d="M7 13l3 3" stroke="#444" strokeWidth="1.600" /></Ic></Tool>
      </Group>
      <Group className="ml-[5px]">
        <Tool label="Move Up" w="w-[26px]"><Ic><path d="M.5 3.500h9v3h-9zM.5 6.500h9v3h-9zM.5 9.500h9v3h-9zM.5 12.500h9v3h-9z" fill="#eee" stroke="#aaa" /><path d="M13.500 10V4M11 6.500L13.500 3 16 6.500" stroke="#aaa" strokeWidth="1.500" fill="none" /></Ic></Tool>
        <Tool label="Move Down" w="w-[27px]"><Ic><path d="M.5 2.500h9v3h-9zM.5 5.500h9v3h-9zM.5 8.500h9v3h-9zM.5 11.500h9v3h-9z" fill="#cfe6fa" stroke="#3b4048" /><path d="M12.500 5.500h2v6h2l-3 4.500-3-4.500h2z" fill="#2e93ea" stroke="#0f58a8" strokeWidth=".7" /></Ic></Tool>
        <Tool label="Outdent" w="w-[27px]"><Ic><path d="M5.500 2.500h8v3h-8zM7.500 6.500h8v3h-8zM5.500 10.500h8v3h-8z" fill="#eee" stroke="#aaa" /><path d="M0 8h4M2 5.500L4.500 8 2 10.500" stroke="#999" fill="none" /></Ic></Tool>
        <Tool label="Indent" w="w-[26px]"><Ic><path d="M2.500 2.500h8v3h-8zM2.500 10.500h8v3h-8z" fill="#fff" stroke="#3b4048" /><path d="M.5 6.500h9v3h-9z" fill="#cfe6fa" stroke="#1767b8" /><path d="M16 8h-4M14 6L11.500 8l2.500 2z" stroke="#222" fill="#222" /></Ic></Tool>
      </Group>
      <Group className="ml-[5px]">
        <Tool label="Add Comment" w="w-[26px]"><Ic><path d="M.6 1.600h15V10H8l-3.500 5v-5H.6z" fill="#f4f5f6" stroke="#3f454f" /><path d="M12.500 9v7M9 12.500h7" stroke="#0c9a14" strokeWidth="2" /></Ic></Tool>
      </Group>
      <Group className="ml-[5px]">
        <Tool label="Columns" w="w-[33px]" caret><Ic><path d="M.5 1.500h15v14H.5z" fill="#fff" stroke="#4c525c" /><path d="M0 1h16v3H0z" fill="#3f454f" /><path d="M5.500 4h5v11h-5z" fill="#8fcb78" stroke="#2f7a20" /><path d="M1 7.500h14M1 11.500h14" stroke="#7b818a" /></Ic></Tool>
      </Group>
      <Group className="ml-9">
        <Tool label="Show Gantt Chart" w="w-[26px]" on><CalendarGlyph><path d="M6.500 7.500h6v2h-6zM9.500 12.500h5v1h-5z" fill="#cfe6fa" stroke="#1c3f6e" /><path d="M5 8.500h2v4.500h3" stroke="#333" fill="none" /></CalendarGlyph></Tool>
      </Group>
      <Group className="ml-[5px]">
        <Tool label="Planned Dates" w="w-[27px]" on><CalendarGlyph><path d="M7.500 10.500h6v3h-6z" fill="#eee" stroke="#777" /></CalendarGlyph></Tool>
        <Tool label="Actual Dates" w="w-[26px]"><CalendarGlyph><path d="M5.500 7.500h6v3h-6z" fill="#cfe6fa" stroke="#1767b8" /></CalendarGlyph></Tool>
        <Tool label="Planned vs Actual" w="w-[26px]"><CalendarGlyph><path d="M8.500 10.500h6v3h-6z" fill="#eee" stroke="#555" /><path d="M5.500 7.500h6v3h-6z" fill="#cfe6fa" stroke="#1767b8" /></CalendarGlyph></Tool>
      </Group>
      <label htmlFor="zoom" className="mr-[9px] ml-3.5 text-[11px]">Zoom:</label>
      <input
        id="zoom"
        type="range"
        defaultValue={0}
        className="h-[22px] w-[115px] appearance-none bg-[linear-gradient(#b4b4b4,#d8d8d8)] bg-[length:100%_2px] bg-center bg-no-repeat [&::-webkit-slider-thumb]:h-[22px] [&::-webkit-slider-thumb]:w-[12px] [&::-webkit-slider-thumb]:appearance-none [&::-webkit-slider-thumb]:rounded-[2px] [&::-webkit-slider-thumb]:border [&::-webkit-slider-thumb]:border-[#4d86a8] [&::-webkit-slider-thumb]:bg-[#c5e6f9]"
      />
      <span className="flex-1" />
      <Group>
        <Tool label="Filter by Status" w="w-[34px]" caret><Ic><path d="M.5 1.500h15v5H.5z" fill="#cfe6fa" stroke="#1767b8" /><path d="M4.500 6.500h12l-4.500 5v4h-3v-4z" fill="#e3e5e8" stroke="#555b66" /></Ic></Tool>
      </Group>
      <Group className="ml-[5px]">
        <Tool label="Export Schedule" w="w-[34px]" caret><ImportGlyph /></Tool>
      </Group>
    </div>
  );
}

type Task = { name: string; level: number; group?: boolean; start: string; end: string; attached?: string };

const tasks: Task[] = [
  { name: "PLACA PRÉ-MOLDADA - TORRE C...", level: 0, group: true, start: "13/01/2014", end: "29/08/2014" },
  { name: "LADO COMERCIAL", level: 1, group: true, start: "13/01/2014", end: "15/08/2014" },
  { name: "PLACA PRÉ-MOLDADA - GERAL ...", level: 2, group: true, start: "12/08/2014", end: "15/08/2014" },
  ...["T145", "T146", "T147"].map((t) => ({ name: "Placa " + t, level: 3, start: "12/08/2014", end: "12/08/2014", attached: "Sets->Terreo->Placa " + t })),
  ...["T141", "T140", "T139", "T138", "T137"].map((t) => ({ name: "Placa " + t, level: 3, start: "15/08/2014", end: "15/08/2014", attached: "Sets->Terreo->Placa " + t })),
  { name: "Placa T136", level: 3, start: "15/08/2014", end: "15/08/2014" },
];

const indents = ["pl-3", "pl-4", "pl-5", "pl-10"];

const headClass = "h-[38px] border-r border-b border-[#a0a0a0] bg-[#f0f0f0] p-0 pt-[3px] font-normal leading-[14px]";
const cellClass = "h-[18px] border-r border-b border-[#f0f0f0] p-0 pl-px align-top leading-4 whitespace-nowrap";

function HScroll({ thumb }: { thumb: string }) {
  return (
    <div className="flex h-4 items-center bg-[#ececec] px-1.5">
      <svg width="4" height="7" viewBox="0 0 4 7"><path d="M4 0v7L0 3.500z" fill="#444" /></svg>
      <span className="w-[9px]" />
      <div className={"flex h-[15px] items-center justify-center gap-0.5 rounded-[1px] border border-[#979797] bg-gradient-to-b from-[#f4f4f4] from-45% to-[#cdcdcd] to-55% " + thumb}>
        <span className="h-2 w-px bg-[#555]" />
        <span className="h-2 w-px bg-[#555]" />
        <span className="h-2 w-px bg-[#555]" />
      </div>
      <span className="flex-1" />
      <svg width="4" height="7" viewBox="0 0 4 7"><path d="M0 0v7l4-3.500z" fill="#444" /></svg>
    </div>
  );
}

function TaskTable() {
  return (
    <div className="w-[899px] shrink-0 border border-[#a5a7ad] bg-white">
      <div className="h-[248px] overflow-hidden">
        <table className="w-full table-fixed border-separate border-spacing-0 text-[11px]">
          <colgroup>
            <col className="w-4" />
            <col className="w-[45px]" />
            <col className="w-[224px]" />
            <col className="w-[37px]" />
            <col className="w-[82px]" />
            <col className="w-[100px]" />
            <col className="w-[84px]" />
            <col className="w-[72px]" />
            <col className="w-[76px]" />
            <col />
          </colgroup>
          <thead>
            <tr>
              <th className={headClass} aria-label="Row" />
              <th className={headClass}>Active</th>
              <th className={headClass}>Name</th>
              <th className={headClass + " px-1 break-all"}>Status</th>
              <th className={headClass}>Planned Start</th>
              <th className={headClass}>Planned End</th>
              <th className={headClass}>Actual Start</th>
              <th className={headClass}>Actual End</th>
              <th className={headClass}>Task Type</th>
              <th className={headClass + " border-r-0 pl-4"}>Attached</th>
            </tr>
          </thead>
          <tbody>
            {tasks.map((t) => (
              <tr key={t.name}>
                <td className="h-[18px] border-r border-b border-[#a0a0a0] bg-[#f0f0f0] p-0" />
                <td className={cellClass}>
                  <span className="relative mx-auto mt-0.5 block h-[13px] w-[13px]">
                    <input type="checkbox" defaultChecked aria-label={t.name + " active"} className="peer block h-[13px] w-[13px] appearance-none border border-[#8e8f8f] bg-[#dde1e8]" />
                    <svg width="13" height="13" viewBox="0 0 13 13" className="pointer-events-none absolute inset-0 hidden peer-checked:block"><path d="M3.500 6l2.500 4 4-7.500" stroke="#3f5c9c" strokeWidth="1.900" fill="none" /></svg>
                  </span>
                </td>
                <td className={cellClass}>
                  <div className={"flex h-[17px] items-center pt-1 leading-[13px] " + indents[t.level]}>
                    {t.group && (
                      <button aria-label={"Collapse " + t.name} className="mr-1.5 shrink-0">
                        <svg width="9" height="9" viewBox="0 0 9 9"><rect x=".5" y=".5" width="8" height="8" rx="1" fill="#f4f4f4" stroke="#919191" /><path d="M2 4.500h5" stroke="#2b4bb0" /></svg>
                      </button>
                    )}
                    <span className={t.group ? "font-bold" : ""}>{t.name}</span>
                  </div>
                </td>
                <td className={cellClass}>
                  <div className="mx-auto mt-0.5 h-1.5 w-[18px] border border-[#5e5e5e] bg-[#a2a2a2]" />
                  <div className="mx-auto mt-0.5 h-1.5 w-[18px] border border-[#d0d0d0] bg-white" />
                </td>
                <td className={cellClass}>{t.start}</td>
                <td className={cellClass}>{t.end}</td>
                <td className={cellClass}>N/A</td>
                <td className={cellClass}>N/A</td>
                <td className={cellClass}>Construct</td>
                <td className={cellClass + " pl-0"}>
                  {t.attached && (
                    <a href="#attached" className="flex items-center gap-px text-[#0000ee]">
                      <SetBall size={15} />
                      {t.attached}
                    </a>
                  )}
                </td>
              </tr>
            ))}
          </tbody>
        </table>
      </div>
      <HScroll thumb="w-[741px]" />
    </div>
  );
}

const quarters = [
  { name: "Qtr 3, 2013", w: "w-[93px]" },
  { name: "Qtr 4, 2013", w: "w-[215px]" },
  { name: "Qtr 1, 2014", w: "w-[211px]" },
  { name: "Qtr 2, 2014", w: "w-[214px]" },
  { name: "Qtr 3, 2014", w: "flex-1" },
];
const months = [
  { name: "", w: "w-[22px]" },
  { name: "set", w: "w-[71px]" },
  { name: "out", w: "w-[72px]" },
  { name: "nov", w: "w-[71px]" },
  { name: "dez", w: "w-[72px]" },
  { name: "jan", w: "w-[73px]" },
  { name: "fev", w: "w-[66px]" },
  { name: "mar", w: "w-[72px]" },
  { name: "abr", w: "w-[71px]" },
  { name: "mai", w: "w-[72px]" },
  { name: "jun", w: "w-[71px]" },
  { name: "jul", w: "w-[72px]" },
  { name: "ago", w: "flex-1" },
];
const monthLines = [21, 92, 164, 235, 307, 380, 446, 518, 589, 661, 732, 804];

function GanttChart() {
  return (
    <div className="ml-[3px] flex min-w-0 flex-1 flex-col border border-[#a5a7ad] bg-[#f0f0f0]">
      <div className="flex h-[248px]">
        <div className="flex min-w-0 flex-1 flex-col text-[11px]">
          <div className="flex h-[19px] border-r border-b border-[#a0a0a0]">
            {quarters.map((q) => (
              <div key={q.name} className={"shrink-0 border-r border-[#a0a0a0] pt-px pl-1 leading-[18px] last:border-r-0 " + q.w}>{q.name}</div>
            ))}
          </div>
          <div className="flex h-[19px] border-r border-b border-[#a0a0a0]">
            {months.map((m) => (
              <div key={m.name} className={"shrink-0 border-r border-[#a0a0a0] pt-px text-center leading-[18px] last:border-r-0 " + m.w}>{m.name}</div>
            ))}
          </div>
          <div className="flex-1 overflow-hidden bg-white">
            <svg width="877" height="210" viewBox="0 0 877 210" role="img" aria-label="Gantt chart">
              {tasks.map((t, i) => (
                <path key={t.name} d={`M0 ${i * 18 + 17.5}H877`} stroke="#efefef" />
              ))}
              {monthLines.map((x) => (
                <path key={x} d={`M${x + 0.5} 0V210`} stroke="#8a8a8a" strokeDasharray="1 1" />
              ))}
              <path d="M330 2H877V10L871 15.500 865 9H342L336 15.500 330 9z" />
              <path d="M330 20H845V27L839 33.500 833 27H342L336 33.500 330 27z" />
              <path d="M825 38h20v7l-6.500 6.500-3.500-3.500-3.500 3.500-6.500-6.500z" />
              {tasks.slice(3).map((t, i) => (
                <rect key={t.name} x={i < 3 ? 832 : 839} y={56 + i * 18} width="2" height="13" />
              ))}
            </svg>
          </div>
        </div>
        <div className="flex w-4 shrink-0 flex-col items-center">
          <span className="h-[46px]" />
          <svg width="7" height="4" viewBox="0 0 7 4" className="shrink-0"><path d="M0 4h7L3.500 0z" fill="#444" /></svg>
          <div className="mt-[11px] h-[15px] w-[15px] shrink-0 rounded-[1px] border border-[#979797] bg-gradient-to-r from-[#f4f4f4] from-45% to-[#cdcdcd] to-55%" />
          <span className="flex-1" />
          <svg width="7" height="4" viewBox="0 0 7 4" className="mb-[7px] shrink-0"><path d="M0 0h7L3.500 4z" fill="#444" /></svg>
        </div>
      </div>
      <div className="mr-4"><HScroll thumb="w-[692px]" /></div>
    </div>
  );
}

function TimeLiner() {
  return (
    <section className="mt-[5px] shrink-0 border border-[#4f4f4f] bg-gradient-to-b from-[#f3f3f3] to-[#dfdfdf]">
      <div className="flex h-[21px] items-center border-b border-[#5c5c5c] bg-gradient-to-b from-[#c3dcf5] to-[#b2d1f0] pr-1.5 pl-[5px]">
        <h2 className="flex-1 text-[11px] text-[#111]">TimeLiner</h2>
        <button aria-label="Pin TimeLiner" className="mr-2.5"><PinGlyph /></button>
        <button aria-label="Close TimeLiner"><CloseGlyph /></button>
      </div>
      <div className="flex h-[33px] items-end border-b border-[#8e8e8e] bg-[#f0f0f0] pl-2.5 text-[11px]">
        <button className="-mb-px h-[23px] border border-b-0 border-[#8e8e8e] bg-white px-[7px]">Tasks</button>
        {["Data Sources", "Configure", "Simulate"].map((t) => (
          <button key={t} className="h-5 border border-b-0 border-[#8e8e8e] bg-gradient-to-b from-[#f0f0f0] from-50% to-[#dadada] to-60% px-1.5 pt-px">{t}</button>
        ))}
      </div>
      <Toolbar />
      <div className="flex px-2.5 pb-2.5">
        <TaskTable />
        <GanttChart />
      </div>
    </section>
  );
}

/* ---------- status bar ---------- */

function Meter({ icon, fill, label }: { icon: ReactNode; fill: number; label: string }) {
  return (
    <div className="flex w-[30px] flex-col items-start gap-px" role="meter" aria-label={label} aria-valuenow={fill}>
      {icon}
      <div className="h-[7px] w-full border border-black bg-[#d0d0d0]">
        <div className="h-full bg-[#0000ff]" style={{ width: `${fill}%` }} />
      </div>
    </div>
  );
}

function StatusBar() {
  return (
    <footer className="flex h-7 shrink-0 items-center pt-px pr-1 pl-[5px] text-[11px] text-[#111]">
      <p className="flex-1 truncate pt-0.5">
        AutoSaved: C:\Users\claudia.lima\AppData\Roaming\Autodesk Navisworks Manage 2013\AutoSave\5186HC-ESTRUTURA_PLACAS.Autosave0.nwf
      </p>
      <button aria-label="First sheet" className="mr-[5px]"><svg width="16" height="15" viewBox="0 0 16 15" fill="#a8a8a8" stroke="#8a8a8a"><path d="M8.500.500v14L.8 7.500zM11.500.500h4v14h-4z" /></svg></button>
      <button aria-label="Previous sheet"><svg width="10" height="15" viewBox="0 0 10 15" fill="#a8a8a8" stroke="#8a8a8a"><path d="M9.500.500v14L.8 7.500z" /></svg></button>
      <span className="mx-4">1 of 1</span>
      <button aria-label="Next sheet"><svg width="10" height="15" viewBox="0 0 10 15" fill="#a8a8a8" stroke="#8a8a8a"><path d="M.5.500v14l8.700-7z" /></svg></button>
      <button aria-label="Last sheet" className="mr-0.5 ml-[5px]"><svg width="16" height="15" viewBox="0 0 16 15" fill="#a8a8a8" stroke="#8a8a8a"><path d="M7.500.500v14l7.700-7zM.5.500h4v14h-4z" /></svg></button>
      <button aria-label="Sheet browser"><svg width="16" height="15" viewBox="0 0 16 15"><path d="M.5.500h15v14H.5z" fill="#fff" stroke="#4c525c" /><path d="M0 0h16v4H0z" fill="#4c525c" /><path d="M3 6.500h3v2H3zM3 10.500h3v2H3z" fill="#b9bec6" stroke="#555b66" strokeWidth=".7" /><path d="M8 7.500h6M8 11.500h6" stroke="#555b66" /></svg></button>
      <span className="mr-[13px] ml-2.5 h-[18px] w-px bg-white" />
      <div className="flex items-end gap-[5px]">
        <Meter label="Pencil progress" fill={100} icon={<svg width="16" height="10" viewBox="0 0 16 10"><path d="M1.500 3.500h9l4 2-4 2h-9z" fill="#b8b8b8" stroke="#000" /><path d="M1 3h2v5H1z" fill="#d00000" /><path d="M11 4l3 1.500L11 7z" fill="#e8d020" /></svg>} />
        <Meter label="Disk progress" fill={46} icon={<svg width="12" height="10" viewBox="0 0 12 10"><path d="M2.500 2.500v5c0 2.500 7 2.500 7 0v-5c0-2.500-7-2.500-7 0zc0 2 7 2 7 0" fill="#b8b8b8" stroke="#000" /></svg>} />
        <Meter label="Web server progress" fill={0} icon={<svg width="17" height="10" viewBox="0 0 17 10" fill="none" stroke="#000"><path d="M1.500 1.500h2v2h-2zM13.500 1.500h2v2h-2zM7.500 1.500h2v2h-2zM2.500 6.500h2v2h-2zM7.500 7.500h2v2h-2zM12.500 6.500h2v2h-2zM4 2.500h9M8.500 4v3M7 4L4 7M10 4l3 3" /></svg>} />
      </div>
      <span className="ml-[7px] pt-1 text-[11px]">401 MB</span>
    </footer>
  );
}

export default function App() {
  return (
    <div className="flex min-h-screen flex-col border-r border-b border-l-3 border-r-[#5a5f66] border-b-[#68737c] border-l-[#b9cbdc] bg-[#9f9f9f] font-['DejaVu_Sans_Condensed','Noto_Sans',sans-serif] text-black">
      <Header />
      <Ribbon />
      <div className="flex flex-1 flex-col px-[3px] pt-1">
        <div className="flex min-h-[400px] flex-1">
          <SelectionTree />
          <SetsWindow />
          <SceneView />
        </div>
        <TimeLiner />
      </div>
      <StatusBar />
    </div>
  );
}
